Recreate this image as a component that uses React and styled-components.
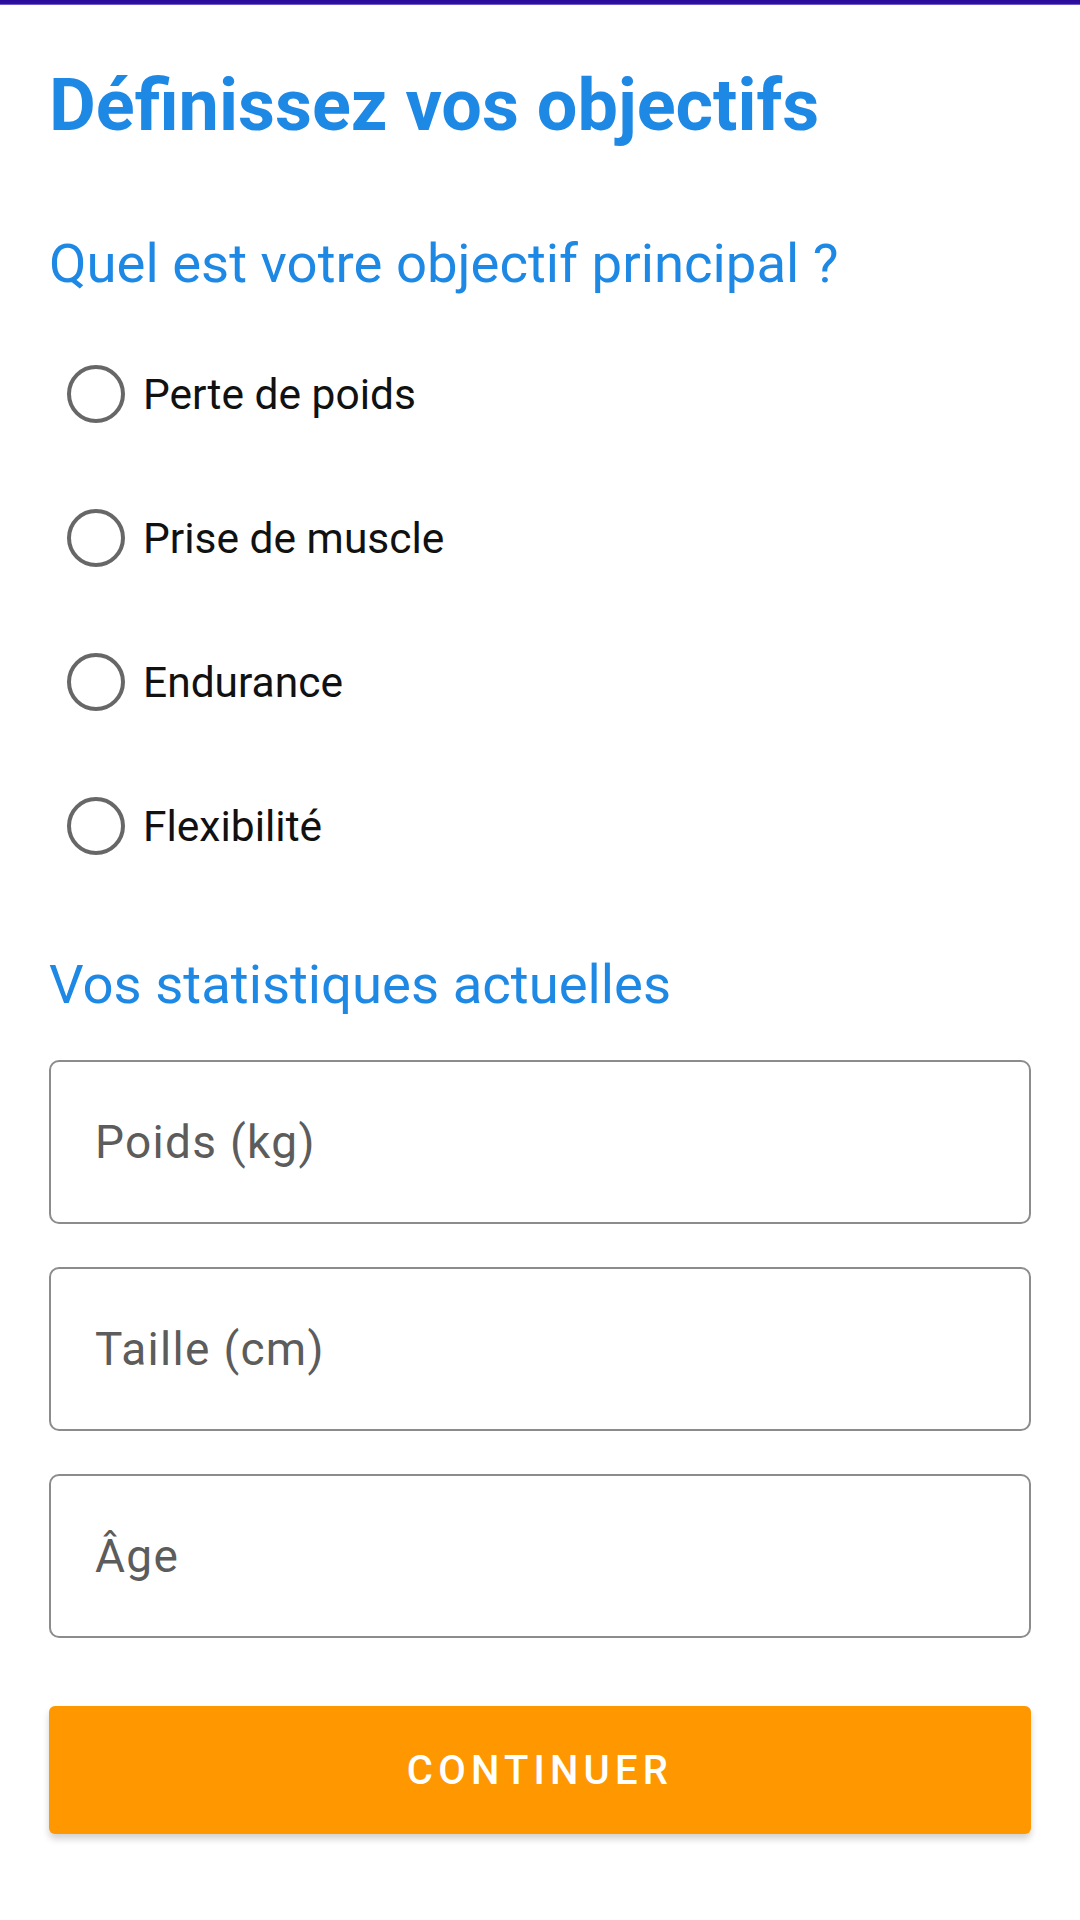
import React from "react";
import styled, { createGlobalStyle } from "styled-components";

const GlobalStyle = createGlobalStyle`
  html, body {
    margin: 0;
    padding: 0;
    background: #ffffff;
    font-family: Roboto, "Noto Sans", "Liberation Sans", sans-serif;
  }
  * { box-sizing: border-box; }
`;

const TopBar = styled.div`
  height: 5px;
  background: linear-gradient(#2a0a96, #2e10a6 70%, #8f80d0);
`;

const Page = styled.main`
  display: flex;
  flex-direction: column;
  padding: 0 49px 80px 49px;
`;

const Title = styled.h1`
  margin: 60px 0 0 0;
  font-family: Roboto, "Liberation Sans", sans-serif;
  font-weight: 700;
  font-size: 72px;
  line-height: 82px;
  color: #1e88e5;
`;

const SectionTitle = styled.h2`
  margin: ${(p) => p.$top}px 0 0 0;
  font-family: Roboto, "Liberation Sans", sans-serif;
  font-weight: 400;
  font-size: 54.5px;
  line-height: 63px;
  color: #1e88e5;
`;

const RadioGroup = styled.div`
  display: flex;
  flex-direction: column;
  margin-top: 27px;
`;

const RadioRow = styled.label`
  display: flex;
  align-items: center;
  height: 144px;
  padding-left: 18px;
  gap: 18px;
  cursor: pointer;
`;

const RadioCircle = styled.input.attrs({ type: "radio" })`
  appearance: none;
  -webkit-appearance: none;
  flex: 0 0 auto;
  width: 58px;
  height: 58px;
  margin: 0;
  border: 4px solid #676767;
  border-radius: 50%;
  background: #fff;
`;

const RadioLabel = styled.span`
  font-family: Roboto, "Liberation Sans", sans-serif;
  font-size: 42.5px;
  color: #111111;
`;

const Fields = styled.div`
  display: flex;
  flex-direction: column;
  gap: 43px;
  margin-top: 44px;
`;

const Field = styled.input`
  width: 100%;
  height: 164px;
  border: 2px solid #8c8c8c;
  border-radius: 10px;
  padding: 0 0 0 44px;
  font-family: Roboto, "Liberation Sans", sans-serif;
  font-size: 46px;
  letter-spacing: 1.3px;
  color: #222;
  background: #fff;
  outline: none;
  &::placeholder {
    color: #5c5c5c;
  }
`;

const PrimaryButton = styled.button`
  margin-top: 68px;
  width: 100%;
  height: 128px;
  border: none;
  border-radius: 6px;
  background: #ff9800;
  color: #ffffff;
  font-family: Roboto, "Liberation Sans", sans-serif;
  font-weight: 500;
  font-size: 40px;
  letter-spacing: 5.2px;
  text-transform: uppercase;
  box-shadow: 0 5px 7px rgba(0, 0, 0, 0.18);
  cursor: pointer;
`;

const goals = ["Perte de poids", "Prise de muscle", "Endurance", "Flexibilité"];
const fields = ["Poids (kg)", "Taille (cm)", "Âge"];

export default function App() {
  return (
    <>
      <GlobalStyle />
      <TopBar />
      <Page>
        <Title>Définissez vos objectifs</Title>
        <SectionTitle $top={85}>Quel est votre objectif principal ?</SectionTitle>
        <RadioGroup>
          {goals.map((g) => (
            <RadioRow key={g}>
              <RadioCircle name="goal" value={g} />
              <RadioLabel>{g}</RadioLabel>
            </RadioRow>
          ))}
        </RadioGroup>
        <SectionTitle $top={55}>Vos statistiques actuelles</SectionTitle>
        <Fields>
          {fields.map((f) => (
            <Field key={f} placeholder={f} />
          ))}
        </Fields>
        <PrimaryButton>Continuer</PrimaryButton>
      </Page>
    </>
  );
}
